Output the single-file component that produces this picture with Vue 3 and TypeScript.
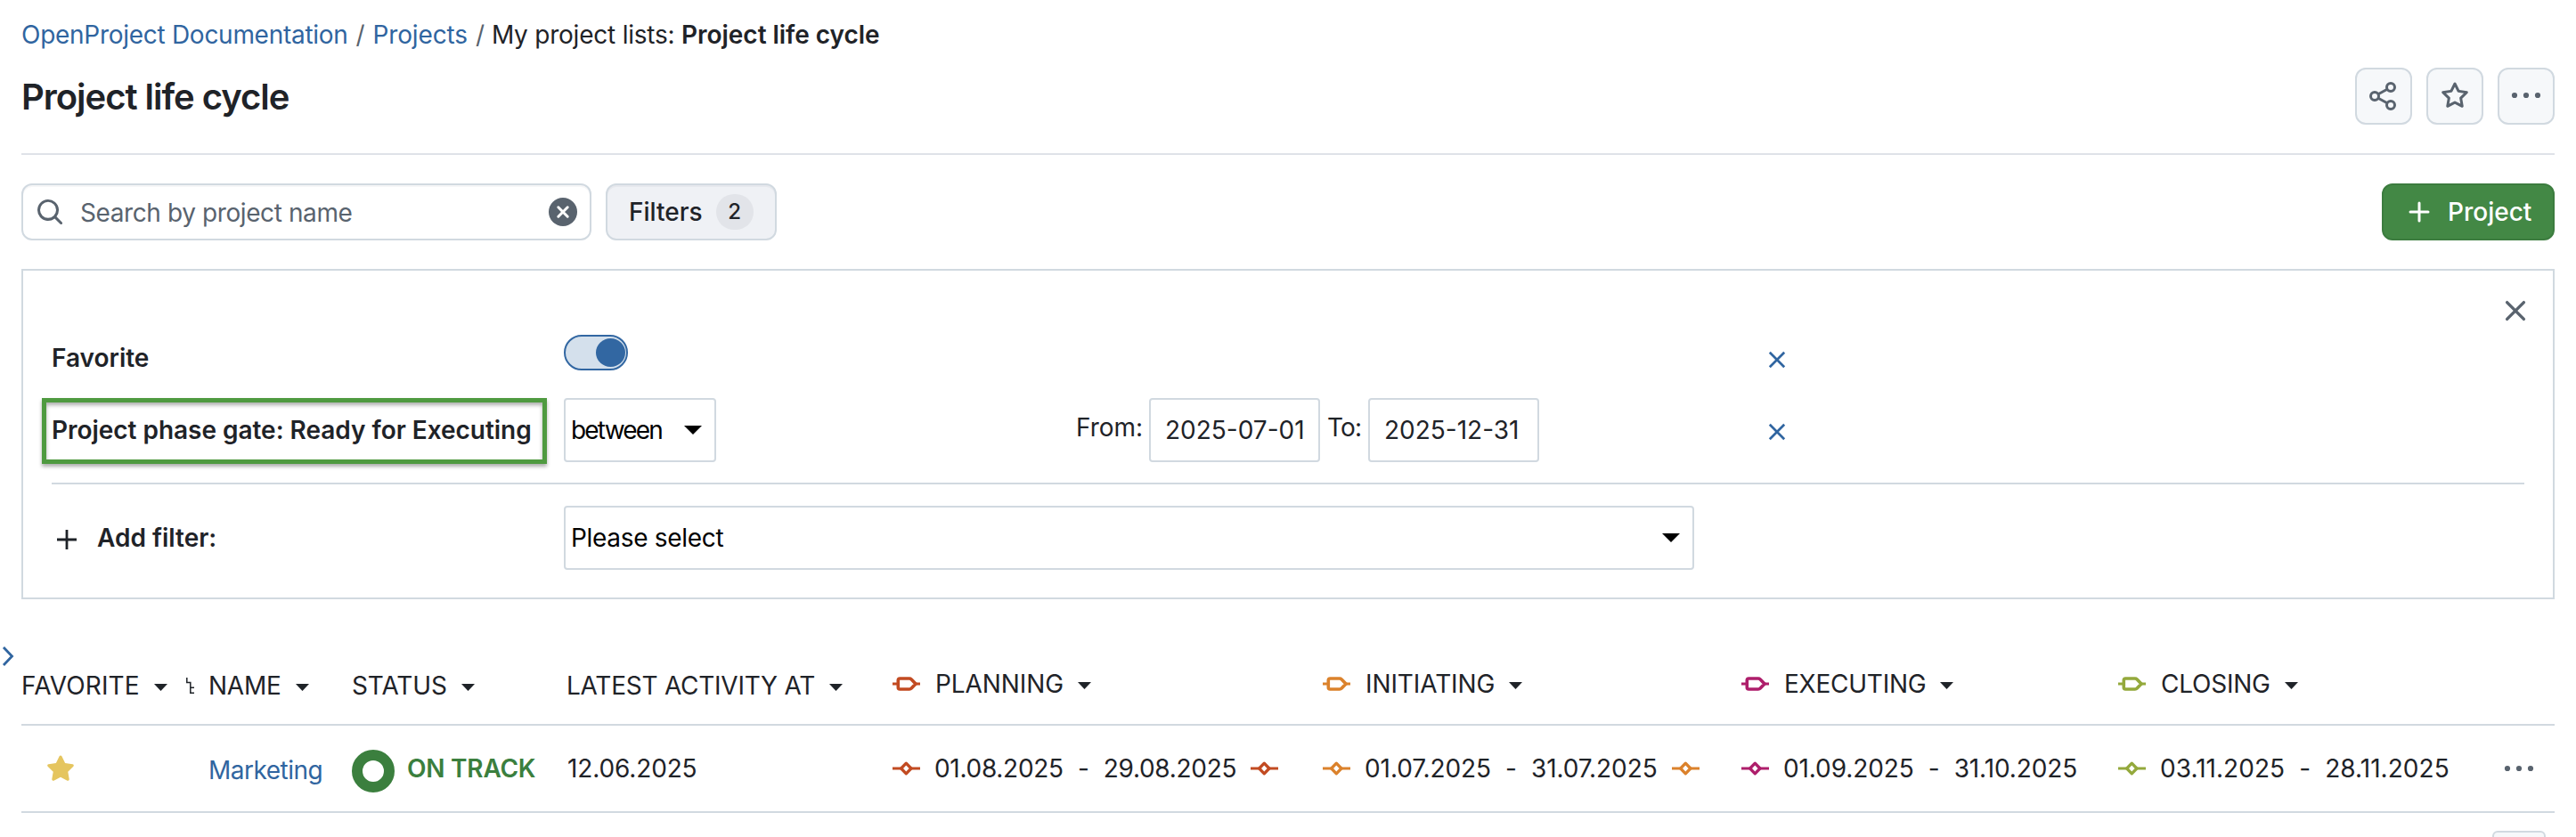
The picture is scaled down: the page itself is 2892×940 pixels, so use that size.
<script setup lang="ts">
interface Column {
  key: string
  label: string
  tracking: 'wide' | 'normal' | 'tight'
  kind: 'plain' | 'tree' | 'staged'
  tone?: string
}

interface Phase {
  tone: string
  from: string
  to: string
  endGate: boolean
}

const columns: Column[] = [
  { key: 'favorite', label: 'FAVORITE', tracking: 'wide', kind: 'plain' },
  { key: 'name', label: 'NAME', tracking: 'tight', kind: 'tree' },
  { key: 'status', label: 'STATUS', tracking: 'normal', kind: 'plain' },
  { key: 'activity', label: 'LATEST ACTIVITY AT', tracking: 'tight', kind: 'plain' },
  { key: 'planning', label: 'PLANNING', tracking: 'normal', kind: 'staged', tone: 'planning' },
  { key: 'initiating', label: 'INITIATING', tracking: 'normal', kind: 'staged', tone: 'initiating' },
  { key: 'executing', label: 'EXECUTING', tracking: 'tight', kind: 'staged', tone: 'executing' },
  { key: 'closing', label: 'CLOSING', tracking: 'tight', kind: 'staged', tone: 'closing' },
]

const phases: Phase[] = [
  { tone: 'planning', from: '01.08.2025', to: '29.08.2025', endGate: true },
  { tone: 'initiating', from: '01.07.2025', to: '31.07.2025', endGate: true },
  { tone: 'executing', from: '01.09.2025', to: '31.10.2025', endGate: false },
  { tone: 'closing', from: '03.11.2025', to: '28.11.2025', endGate: false },
]
</script>

<template>
  <div class="page">
    <nav class="crumbs">
      <a class="link crumb-root">OpenProject Documentation</a>
      <span class="slash">/</span>
      <a class="link">Projects</a>
      <span class="slash">/</span>
      <span class="crumb-current">My project lists: <b>Project life cycle</b></span>
    </nav>

    <header class="title-row">
      <h1>Project life cycle</h1>
      <div class="actions">
        <button class="icon-btn">
          <svg width="32" height="32" viewBox="0 0 32 32" fill="none" stroke="currentColor" stroke-width="3">
            <path d="M10 13.8 20 8.2M10 18.2l10 5.6" />
            <circle cx="24" cy="6" r="4.5" />
            <circle cx="6" cy="16" r="4.5" />
            <circle cx="24" cy="26" r="4.5" />
          </svg>
        </button>
        <button class="icon-btn">
          <svg width="32" height="32" viewBox="0 0 16 16" fill="currentColor">
            <path d="M8 .25a.75.75 0 0 1 .673.418l1.882 3.815 4.21.612a.75.75 0 0 1 .416 1.279l-3.046 2.97.719 4.192a.751.751 0 0 1-1.088.791L8 12.347l-3.766 1.98a.75.75 0 0 1-1.088-.79l.72-4.194L.818 6.374a.75.75 0 0 1 .416-1.28l4.21-.611L7.327.668A.75.75 0 0 1 8 .25Zm0 2.445L6.615 5.5a.75.75 0 0 1-.564.41l-3.097.45 2.24 2.184a.75.75 0 0 1 .216.664l-.528 3.084 2.769-1.456a.75.75 0 0 1 .698 0l2.77 1.456-.53-3.084a.75.75 0 0 1 .216-.664l2.24-2.183-3.096-.45a.75.75 0 0 1-.564-.41L8 2.694Z" />
          </svg>
        </button>
        <button class="icon-btn">
          <svg width="34" height="32" viewBox="0 0 34 32" fill="currentColor">
            <circle cx="4" cy="15" r="3.1" /><circle cx="17" cy="15" r="3.1" /><circle cx="30" cy="15" r="3.1" />
          </svg>
        </button>
      </div>
    </header>

    <div class="toolbar">
      <div class="search">
        <svg width="32" height="32" viewBox="0 0 16 16" fill="currentColor">
          <path d="M10.68 11.74a6 6 0 0 1-7.922-8.982 6 6 0 0 1 8.982 7.922l3.04 3.04a.749.749 0 0 1-.326 1.275.749.749 0 0 1-.734-.215ZM11.5 7a4.499 4.499 0 1 0-8.997 0A4.499 4.499 0 0 0 11.5 7Z" />
        </svg>
        <span class="placeholder">Search by project name</span>
        <svg width="32" height="32" viewBox="0 0 32 32">
          <circle cx="16" cy="16" r="16" fill="currentColor" />
          <path d="m10.8 10.8 10.4 10.4m0-10.4L10.8 21.2" stroke="#fff" stroke-width="3" stroke-linecap="round" />
        </svg>
      </div>
      <button class="filters"><span>Filters</span><span class="badge">2</span></button>
      <button class="create">
        <svg width="24" height="24" viewBox="0 0 24 24" stroke="currentColor" stroke-width="3" stroke-linecap="round">
          <path d="M12 2v20M2 12h20" />
        </svg>
        <span>Project</span>
      </button>
    </div>

    <section class="panel">
      <svg class="close" width="24" height="24" viewBox="0 0 24 24" stroke="currentColor" stroke-width="3.4" stroke-linecap="round">
        <path d="m2.6 2.6 18.8 18.8m0-18.8L2.6 21.4" />
      </svg>

      <div class="filter-row first">
        <div class="label">Favorite</div>
        <div class="control"><div class="toggle"><i /></div></div>
        <svg class="remove" width="20" height="20" viewBox="0 0 20 20" stroke="currentColor" stroke-width="2.7">
          <path d="m1.8 1.8 16.4 16.4m0-16.4L1.8 18.2" />
        </svg>
      </div>

      <div class="filter-row second">
        <div class="label marked">Project phase gate: Ready for Executing</div>
        <div class="control">
          <div class="select short">
            <span class="between">between</span>
            <svg width="20" height="10" viewBox="0 0 20 10"><path d="M0 0h20L10 10Z" /></svg>
          </div>
          <div class="range">
            <span class="range-label from">From:</span>
            <div class="date">2025-07-01</div>
            <span class="range-label to">To:</span>
            <div class="date">2025-12-31</div>
          </div>
        </div>
        <svg class="remove" width="20" height="20" viewBox="0 0 20 20" stroke="currentColor" stroke-width="2.7">
          <path d="m1.8 1.8 16.4 16.4m0-16.4L1.8 18.2" />
        </svg>
      </div>

      <hr />

      <div class="filter-row third">
        <div class="add">
          <svg width="24" height="24" viewBox="0 0 24 24" stroke="currentColor" stroke-width="2.8">
            <path d="M12 1v22M1 12h22" />
          </svg>
          <span>Add filter:</span>
        </div>
        <div class="select long">
          <span>Please select</span>
          <svg width="20" height="10" viewBox="0 0 20 10"><path d="M0 0h20L10 10Z" /></svg>
        </div>
      </div>
    </section>

    <svg class="expander" width="14" height="24" viewBox="0 0 14 24" fill="none" stroke="currentColor" stroke-width="2.8">
      <path d="m2 2 9.5 10L2 22" />
    </svg>

    <div class="table">
      <div class="row head">
        <div v-for="c in columns" :key="c.key" class="th" :class="c.kind">
          <svg v-if="c.kind === 'tree'" class="tree-icon" width="12" height="20" viewBox="0 0 12 20" fill="none" stroke="currentColor" stroke-width="1.5">
            <path d="M1.8 1v5.5h4V18.2H10M5.8 12.2H10" />
          </svg>
          <svg v-if="c.kind === 'staged'" class="mark" :class="c.tone" width="32" height="20" viewBox="0 0 32 20" fill="none" stroke="currentColor" stroke-linejoin="round">
            <path d="M0 10h6M26 10h5" stroke-width="3" />
            <path d="M8.3 4H19c1 0 1.6.3 2.200.9L26 10l-4.800 5.100c-.6.6-1.200.9-2.200.9H8.300c-1.300 0-2-.7-2-2V6c0-1.300.7-2 2-2Z" stroke-width="3.600" />
          </svg>
          <span :class="c.tracking">{{ c.label }}</span>
          <svg class="caret" width="15" height="8" viewBox="0 0 15 8" fill="currentColor"><path d="M0 0h15L7.500 8Z" /></svg>
        </div>
      </div>

      <div class="row body">
        <div class="td fav">
          <svg width="32" height="32" viewBox="0 0 16 16" fill="currentColor">
            <path d="M8 .25a.75.75 0 0 1 .673.418l1.882 3.815 4.21.612a.75.75 0 0 1 .416 1.279l-3.046 2.97.719 4.192a.751.751 0 0 1-1.088.791L8 12.347l-3.766 1.98a.75.75 0 0 1-1.088-.79l.72-4.194L.818 6.374a.75.75 0 0 1 .416-1.28l4.21-.611L7.327.668A.75.75 0 0 1 8 .25Z" />
          </svg>
        </div>
        <div class="td name"><a class="link">Marketing</a></div>
        <div class="td status"><i class="ring" /><span>ON TRACK</span></div>
        <div class="td activity">12.06.2025</div>
        <div v-for="p in phases" :key="p.tone" class="td phase" :class="p.tone">
          <svg class="gate" width="31" height="18" viewBox="0 0 31 18" fill="none" stroke="currentColor">
            <path d="M0 9h9.500M21 9h10" stroke-width="2.800" />
            <path d="m15.300 3.200 5.600 5.800-5.600 5.800L9.700 9Z" stroke-width="3.300" stroke-linejoin="round" />
          </svg>
          <span>{{ p.from }}</span><span class="dash">-</span><span>{{ p.to }}</span>
          <svg v-if="p.endGate" class="gate last" width="31" height="18" viewBox="0 0 31 18" fill="none" stroke="currentColor">
            <path d="M0 9h9.500M21 9h10" stroke-width="2.800" />
            <path d="m15.300 3.200 5.600 5.800-5.600 5.800L9.700 9Z" stroke-width="3.300" stroke-linejoin="round" />
          </svg>
        </div>
        <div class="td more">
          <svg width="34" height="8" viewBox="0 0 34 8" fill="currentColor">
            <circle cx="4" cy="4" r="3.100" /><circle cx="17" cy="4" r="3.100" /><circle cx="30" cy="4" r="3.100" />
          </svg>
        </div>
      </div>
    </div>
    <div class="footer"><div class="stub" /></div>
  </div>
</template>

<style>
html,
body {
  background: #fff;
  overflow: hidden;
}
</style>

<style scoped>
.page {
  position: relative;
  box-sizing: border-box;
  width: 2892px;
  height: 940px;
  overflow: hidden;
  padding: 19px 24px 0;
  background: #fff;
  color: #1f2328;
  font: 400 28px/40px Inter, "Liberation Sans", sans-serif;
}
.page *,
.page *::after {
  box-sizing: border-box;
}
.page svg {
  display: block;
  flex: none;
}
button {
  font: inherit;
  color: inherit;
  padding: 0;
  margin: 0;
}
.link {
  color: #3065a0;
}
.crumbs {
  display: flex;
  height: 40px;
  white-space: nowrap;
  letter-spacing: -0.15px;
}
.crumb-root {
  letter-spacing: -0.28px;
}
.slash {
  width: 28px;
  text-align: center;
  color: #59636e;
}
.crumb-current {
  margin-left: -1px;
  letter-spacing: -0.22px;
}
.crumb-current b {
  font-weight: 600;
  letter-spacing: -0.04px;
}
.title-row {
  display: flex;
  justify-content: space-between;
  height: 98px;
  margin-top: 17px;
  border-bottom: 2px solid #dfe2e8;
}
h1 {
  margin: 0;
  font-size: 40px;
  line-height: 65px;
  font-weight: 600;
  letter-spacing: -1.02px;
}
.actions {
  display: flex;
  gap: 16px;
}
.icon-btn {
  display: flex;
  align-items: center;
  justify-content: center;
  width: 64px;
  height: 64px;
  border: 2px solid #d1d9e0;
  border-radius: 12px;
  background: #f6f8fa;
  color: #59636e;
}
.toolbar {
  display: flex;
  gap: 16px;
  height: 64px;
  margin-top: 32px;
}
.search {
  display: flex;
  align-items: center;
  width: 640px;
  padding: 0 14px;
  border: 2px solid #d1d9e0;
  border-radius: 12px;
  box-shadow: inset 0 2px 0 rgba(31, 35, 40, 0.04);
  color: #59636e;
}
.placeholder {
  flex: 1;
  margin: 2px 0 0 18px;
  letter-spacing: -0.4px;
}
.filters {
  display: flex;
  align-items: center;
  width: 192px;
  padding-left: 24px;
  border: 2px solid #d1d9e0;
  border-radius: 12px;
  background: #eff1f5;
  box-shadow: inset 0 2px 0 rgba(31, 35, 40, 0.04);
  font-weight: 500;
}
.badge {
  width: 42px;
  height: 40px;
  margin-left: 15px;
  border-radius: 20px;
  background: #e2e4e9;
  font-size: 24px;
  line-height: 40px;
  text-align: center;
}
.create {
  display: flex;
  align-items: center;
  width: 194px;
  margin-left: auto;
  padding-left: 28px;
  border: 2px solid #3c7c3f;
  border-radius: 12px;
  background: #438845;
  color: #fff;
  font-weight: 500;
}
.create span {
  margin-left: 20px;
}
.panel {
  height: 371px;
  margin-top: 32px;
  padding: 34px 32px 0;
  border: 2px solid #d1d9e0;
}
.close {
  margin: -1px -2px 0 auto;
  color: #59636e;
}
.filter-row {
  display: grid;
  grid-template-columns: 575px 1352px 20px;
  align-items: start;
}
.first {
  height: 71px;
  margin-top: 15px;
}
.second {
  height: 72px;
}
.third {
  margin-top: 24px;
}
.label,
.add {
  font-weight: 600;
  white-space: nowrap;
}
.label {
  position: relative;
  margin-top: 6px;
}
.label.marked {
  margin-top: 16px;
  letter-spacing: -0.03px;
}
.marked::after {
  content: "";
  position: absolute;
  left: -11px;
  top: -16px;
  width: 567px;
  height: 74px;
  border: 5px solid #4f9a40;
  box-shadow: 0 3px 4px rgba(0, 0, 0, 0.32), inset 0 3px 4px rgba(0, 0, 0, 0.32);
}
.control {
  display: flex;
  justify-content: space-between;
}
.remove {
  margin-top: 18px;
  color: #3065a0;
}
.second .remove {
  margin-top: 28px;
}
.toggle {
  width: 72px;
  height: 40px;
  border: 2px solid #3267a2;
  border-radius: 20px;
  background: #d4e0ec;
}
.toggle i {
  display: block;
  width: 33px;
  height: 32px;
  margin: 2px 1px 0 auto;
  border-radius: 50%;
  background: #3267a2;
}
.select {
  display: flex;
  align-items: center;
  justify-content: space-between;
  height: 72px;
  padding: 0 14px 0 6px;
  border: 2px solid #d1d9e0;
  border-radius: 4px;
  color: #000;
  letter-spacing: -0.3px;
}
.short {
  width: 171px;
}
.between {
  letter-spacing: -1.8px;
}
.long {
  width: 1269px;
}
.range {
  display: flex;
  margin-right: 257px;
}
.range-label {
  margin-top: 13px;
}
.from {
  width: 82px;
}
.to {
  width: 46px;
  margin-left: 8px;
  letter-spacing: -0.8px;
}
.date {
  width: 192px;
  height: 72px;
  padding-left: 16px;
  border: 2px solid #d1d9e0;
  border-radius: 4px;
  line-height: 68px;
}
hr {
  height: 2px;
  margin: 23px 0 0;
  border: 0;
  background: #d1d9e0;
}
.add {
  display: flex;
  align-items: center;
  height: 72px;
  padding-left: 5px;
}
.add svg {
  margin-top: 4px;
}
.add span {
  margin-left: 22px;
}
.expander {
  position: absolute;
  left: 2px;
  top: 725px;
  color: #3065a0;
}
.table {
  margin-top: 77px;
}
.row {
  display: grid;
  grid-template-columns: 184px 187px 241px 365px 483px 470px 423px 434px 57px;
  border-bottom: 2px solid #d1d9e0;
  white-space: nowrap;
}
.head {
  height: 65px;
}
.th {
  display: flex;
  align-items: flex-start;
  height: 40px;
}
.th.staged {
  margin-top: -2px;
}
.th .caret {
  margin: 18px 0 0 16px;
}
.tree-icon {
  margin: 10px 14px 0 0;
}
.mark {
  margin: 10px 16px 0 1px;
}
.wide {
  letter-spacing: 0.15px;
}
.normal {
  letter-spacing: -0.09px;
}
.tight {
  letter-spacing: -0.24px;
}
.body {
  height: 98px;
}
.td {
  display: flex;
  align-items: flex-start;
  padding-top: 28px;
}
.td.fav {
  padding: 33px 0 0 28px;
  color: #e5c55f;
}
.td.name {
  padding: 30px 0 0 26px;
  letter-spacing: -0.5px;
}
.td.status {
  color: #3b7f3e;
  font-weight: 600;
  letter-spacing: -0.24px;
}
.ring {
  width: 48px;
  height: 48px;
  margin: -1px 14px 0 0;
  border: 12px solid #3b7f3e;
  border-radius: 50%;
}
.td.activity {
  padding-left: 1px;
  letter-spacing: -0.13px;
}
.gate {
  margin: 11px 16px 0 1px;
}
.gate.last {
  margin: 11px 0 0 16px;
}
.dash {
  width: 45px;
  text-align: center;
}
.td.more {
  padding: 44px 0 0 0;
  color: #59636e;
}
.planning {
  --tone: #c24b22;
  letter-spacing: -0.29px;
}
.initiating {
  --tone: #db822c;
  letter-spacing: -0.08px;
}
.executing {
  --tone: #ae1e6b;
  letter-spacing: -0.1px;
}
.closing {
  --tone: #94a93c;
  letter-spacing: 0.05px;
}
.mark,
.gate {
  color: var(--tone);
}
.footer {
  display: flex;
  justify-content: flex-end;
  margin-top: 20px;
  padding-right: 10px;
}
.stub {
  width: 60px;
  height: 60px;
  border: 2px solid #d1d9e0;
  border-radius: 6px;
  background: #f6f8fa;
}
</style>
